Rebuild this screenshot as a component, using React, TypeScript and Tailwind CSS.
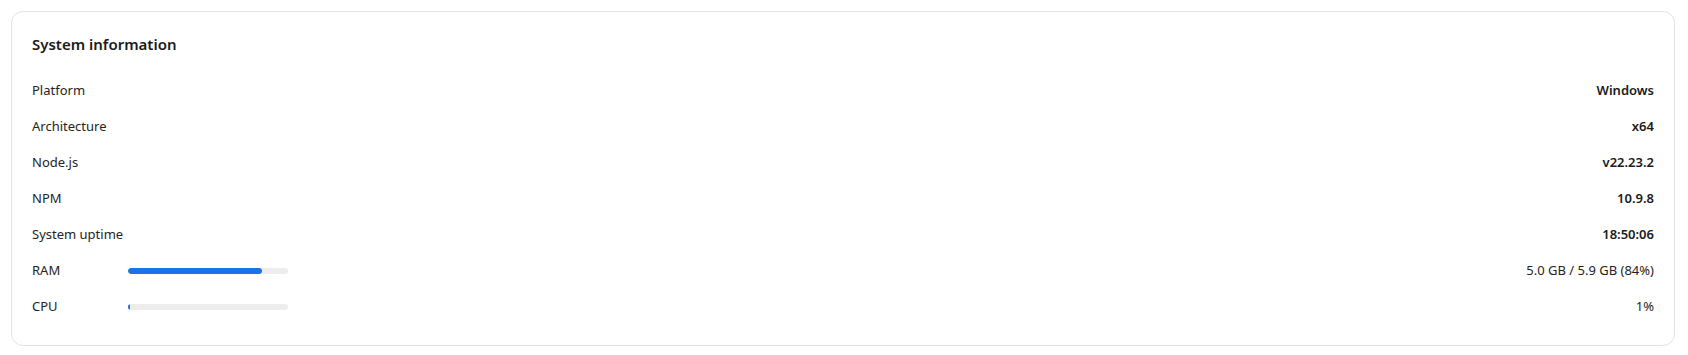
import React from 'react';

interface InfoRow {
  label: string;
  value: string;
  bar?: number;
}

const rows: InfoRow[] = [
  { label: 'Platform', value: 'Windows' },
  { label: 'Architecture', value: 'x64' },
  { label: 'Node.js', value: 'v22.23.2' },
  { label: 'NPM', value: '10.9.8' },
  { label: 'System uptime', value: '18:50:06' },
  { label: 'RAM', value: '5.0 GB / 5.9 GB (84%)', bar: 84 },
  { label: 'CPU', value: '1%', bar: 1 },
];

const Row: React.FC<{ row: InfoRow }> = ({ row }) => {
  const hasBar = row.bar !== undefined;
  return (
    <div className="flex h-[36px] items-center text-[13px]">
      <span className="w-[96px] shrink-0 text-[#242424]">{row.label}</span>
      {hasBar && (
        <div className="h-[6px] w-[160px] overflow-hidden rounded-full bg-[#ededed]">
          <div className="h-full rounded-full bg-[#1a73e8]" style={{ width: `${row.bar}%` }} />
        </div>
      )}
      <span
        className={
          'ml-auto text-right ' + (hasBar ? 'font-normal text-[#242424]' : 'font-semibold text-[#1b1b1b]')
        }
      >
        {row.value}
      </span>
    </div>
  );
};

export default function App() {
  return (
    <div className="min-h-screen bg-white p-[11px] pr-[13px]" style={{ fontFamily: '"Noto Sans", "Open Sans", sans-serif' }}>
      <div className="rounded-xl border border-[#e3e3e3] bg-white px-[20px] pt-[18px] pb-[20px]">
        <h2 className="h-[28px] text-[15px] font-semibold leading-[28px] text-[#1b1b1b]">System information</h2>
        <div className="mt-[15px] flex flex-col">
          {rows.map((r) => (
            <Row key={r.label} row={r} />
          ))}
        </div>
      </div>
    </div>
  );
}
